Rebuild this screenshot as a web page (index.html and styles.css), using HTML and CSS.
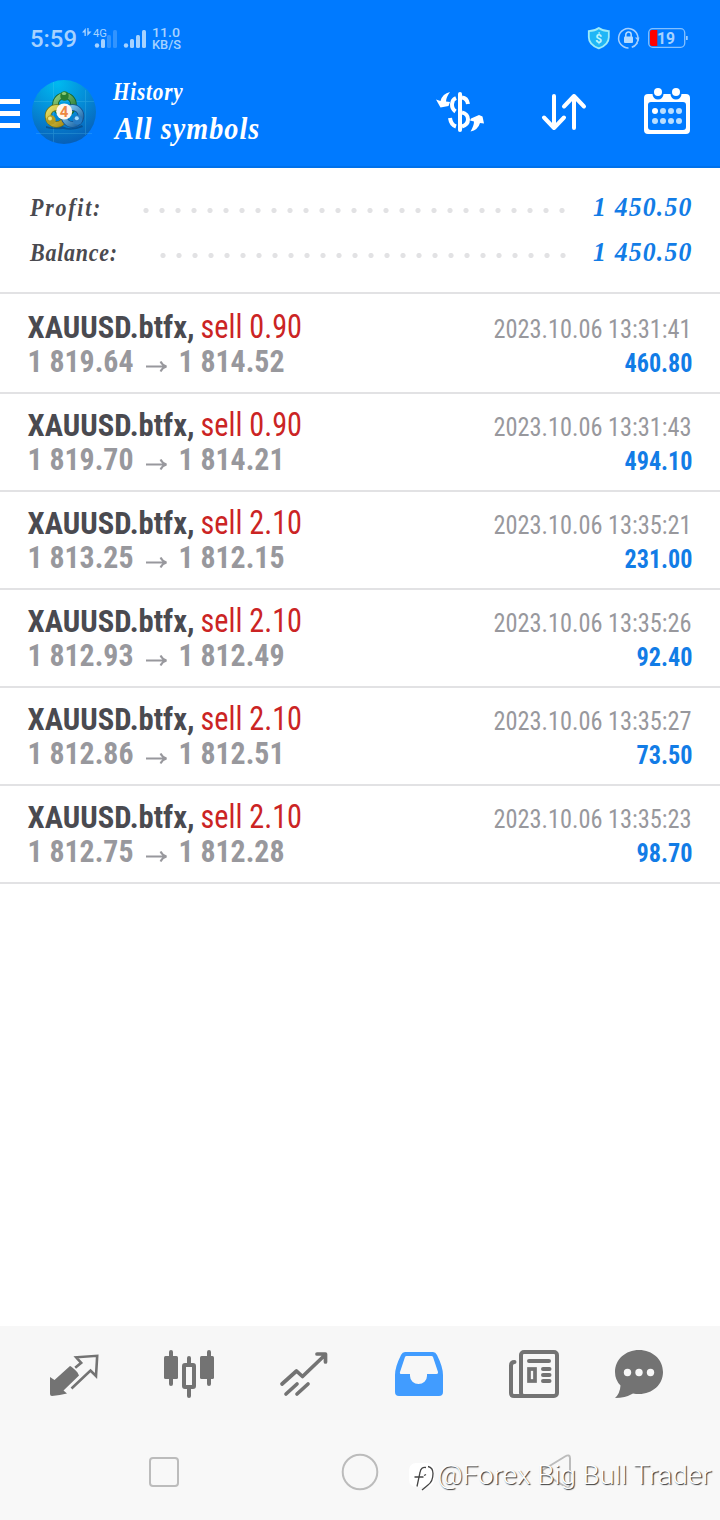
FILE: index.html
```html
<!DOCTYPE html>
<html lang="en">
<head>
<meta charset="utf-8">
<title>History</title>
<link rel="stylesheet" href="styles.css">
</head>
<body>
<header class="top">
  <div class="status">
    <svg class="status-left" width="160" height="76" viewBox="30 0 160 76">
      <text x="30" y="47" class="clock" textLength="47" lengthAdjust="spacingAndGlyphs">5:59</text>
      <path d="M85.800 28v8h-1.300v-3.500H82zM87.300 36v-8h1.300v3.500H91.500z" fill="#a6d2ff"/>
      <text x="93" y="37" class="tiny4g" textLength="14" lengthAdjust="spacingAndGlyphs">4G</text>
      <g class="sig">
        <circle cx="97" cy="45.500" r="2.200"/><rect x="101" y="39" width="4" height="9" rx="1.500"/>
        <rect x="107" y="35" width="4" height="13" rx="1.500" opacity=".3"/><rect x="113" y="30" width="4" height="18" rx="1.500" opacity=".3"/>
        <circle cx="126" cy="45.500" r="2.200"/><rect x="130" y="39" width="4" height="9" rx="1.500"/>
        <rect x="136" y="35" width="4" height="13" rx="1.500"/><rect x="142" y="30" width="4" height="18" rx="1.500"/>
      </g>
      <text x="152" y="37" class="speed" textLength="28" lengthAdjust="spacingAndGlyphs">11.0</text>
      <text x="152" y="49" class="unit" textLength="29" lengthAdjust="spacingAndGlyphs">KB/S</text>
    </svg>
    <svg class="status-right" width="104" height="76" viewBox="586 0 104 76">
      <path d="M598.800 28q4 3 10 3.200v6q0 7.500-10 11.200q-10-3.700-10-11.200v-6q6-.2 10-3.200z" fill="#20b6f6" stroke="#9debf8" stroke-width="1.800"/>
      <text x="595.200" y="42.500" class="dollar">$</text>
      <path d="M636.500 43.500a9.700 9.700 0 1 0-8 4.500" fill="none" stroke="#a4d0ff" stroke-width="1.500"/>
      <path d="M635 37.500h4.400l-1 4zM636.500 42.500l1.500 1q-3 4-6 4.500l-.5-1.500q3-1 5-4z" fill="#a4d0ff"/>
      <rect x="624" y="36.500" width="9" height="6.500" rx="1" fill="#b5dbff"/>
      <path d="M625.800 37v-2.200a2.700 2.700 0 0 1 5.400 0v2.200" fill="none" stroke="#b5dbff" stroke-width="1.500"/>
      <rect x="648.700" y="28.700" width="36" height="18.600" rx="4" fill="none" stroke="#83c0ff" stroke-width="1.300"/>
      <path d="M652 30h5.300v16H652q-2-.2-2-2V32q0-1.800 2-2z" fill="#f00"/>
      <path d="M686 36h1.700v4H686z" fill="#9accff"/>
      <text x="657" y="44" class="batt" textLength="18" lengthAdjust="spacingAndGlyphs">19</text>
    </svg>
  </div>
  <div class="bar">
    <svg class="menu" width="20" height="92" viewBox="0 76 20 92"><path d="M0 101.500h20M0 113.500h20M0 125.500h20" stroke="#fff" stroke-width="5"/></svg>
    <svg class="logo" width="64" height="92" viewBox="32 76 64 92">
      <defs>
        <radialGradient id="sky" cx=".4" cy=".05" r=".95"><stop offset="0" stop-color="#00baf0"/><stop offset=".5" stop-color="#048dd8"/><stop offset="1" stop-color="#0760b8"/></radialGradient>
        <linearGradient id="gn" x1="0" y1="0" x2="1" y2="1"><stop offset="0" stop-color="#8ecb7a"/><stop offset="1" stop-color="#217632"/></linearGradient>
        <linearGradient id="ye" x1="0" y1="0" x2="1" y2="1"><stop offset="0" stop-color="#e6e066"/><stop offset="1" stop-color="#a88a16"/></linearGradient>
        <linearGradient id="bl" x1="0" y1="0" x2="1" y2="1"><stop offset="0" stop-color="#8fd5f8"/><stop offset="1" stop-color="#155e9f"/></linearGradient>
      </defs>
      <circle cx="64" cy="112" r="32" fill="url(#sky)"/>
      <path d="M53.500 82v60M85.500 90v45M34 101.500h60M36 133.500h56" stroke="#65d0f2" stroke-width=".8" opacity=".28"/>
      <path d="M46 126q9 3 16 0q10 5 20-1l1 2q-9 4-20 2q-9 1-17-1z" fill="#063d75" opacity=".6"/>
      <g fill="none">
        <circle cx="64.500" cy="104.500" r="9" stroke="#17652b" stroke-width="6.500"/><circle cx="64.500" cy="104.500" r="9" stroke="url(#gn)" stroke-width="4.800"/>
        <circle cx="56.500" cy="116" r="8.500" stroke="#6f7117" stroke-width="6.500"/><circle cx="56.500" cy="116" r="8.500" stroke="url(#ye)" stroke-width="4.800"/>
        <circle cx="72.500" cy="116" r="8.500" stroke="#154f8e" stroke-width="6.500"/><circle cx="72.500" cy="116" r="8.500" stroke="url(#bl)" stroke-width="4.800"/>
      </g>
      <ellipse cx="64.500" cy="96" rx="4.200" ry="4.800" fill="#287e31"/><ellipse cx="64" cy="93.500" rx="2.200" ry="1.500" fill="#8acb76"/>
      <circle cx="51" cy="120" r="4.700" fill="#b59c20"/><circle cx="50" cy="118.500" r="2" fill="#efe583"/>
      <circle cx="77.500" cy="120" r="4.700" fill="#287cc4"/><circle cx="76.800" cy="118.300" r="2" fill="#a5dcff"/>
      <circle cx="64.200" cy="111.500" r="8" fill="#fff6ee"/>
      <text x="59.800" y="117" class="four">4</text>
    </svg>
    <svg class="title" width="170" height="92" viewBox="113 76 170 92">
      <text transform="translate(113 100) scale(.85 1)" class="script white" font-size="25" textLength="82" lengthAdjust="spacing">History</text>
      <text transform="translate(115 138.500) scale(.88 1)" class="script white" font-size="32" textLength="164" lengthAdjust="spacing">All symbols</text>
    </svg>
    <svg class="actions" width="280" height="92" viewBox="430 76 280 92">
      <g fill="none" stroke="#fff" stroke-width="4">
        <path d="M460 94v36" stroke-linecap="round"/>
        <path d="M456 98c-5 2-5.500 10-.5 13.500M462 97.500q5 .5 6 6.500M450 118q1 7 6 8.500M462 112.500c8 1.500 8 12 0 14"/>
      </g>
      <path d="M450 92q-7.500 1.500-9.500 9L436 99.500l4.500 8 8-1.500 1.500-4-4-.5q0-4 4-9.500zM470.500 131.500q7.500-1.500 9.500-8.500l4 .500-1.500-7-3.500-1.500-8 3.500-1 2 4 1q0 4-3.500 10z" fill="#fff"/>
      <path d="M554 96v32M544 117.500l10 10.500 10-10.500M574 128V96M564 106.500l10-10.500 10 10.500" fill="none" stroke="#fff" stroke-width="4" stroke-linecap="round" stroke-linejoin="round"/>
      <path d="M648 94h4.500a5.500 5.500 0 0 0 11 0h7a5.500 5.500 0 0 0 11 0h4.500q4 0 4 4v32q0 4-4 4h-38q-4 0-4-4V98q0-4 4-4zm3 8q-3 0-3 3v22q0 3 3 3h32q3 0 3-3v-22q0-3-3-3z" fill="#fff" fill-rule="evenodd"/>
      <circle cx="658" cy="92" r="4" fill="#fff"/><circle cx="676" cy="92" r="4" fill="#fff"/>
      <g fill="#b9deff"><circle cx="655" cy="111" r="3" fill="#fff"/><circle cx="663" cy="111" r="3"/><circle cx="671" cy="111" r="3"/><circle cx="679" cy="111" r="3"/><circle cx="655" cy="121" r="3"/><circle cx="663" cy="121" r="3"/><circle cx="671" cy="121" r="3"/><circle cx="679" cy="121" r="3"/></g>
    </svg>
  </div>
</header>

<main>
  <section class="summary">
    <div class="sum-row">
      <svg width="113" height="45"><text transform="translate(2 27.500) scale(.88 1)" class="script dark" font-size="25" textLength="80" lengthAdjust="spacing">Profit:</text></svg>
      <i class="dots profit-dots"></i>
      <svg width="100" height="45"><text transform="translate(1 27.500) scale(.92 1)" class="script blue" font-size="28" textLength="107" lengthAdjust="spacing">1 450.50</text></svg>
    </div>
    <div class="sum-row">
      <svg width="130" height="45"><text transform="translate(2 27.500) scale(.88 1)" class="script dark" font-size="25" textLength="99" lengthAdjust="spacing">Balance:</text></svg>
      <i class="dots balance-dots"></i>
      <svg width="100" height="45"><text transform="translate(1 27.500) scale(.92 1)" class="script blue" font-size="28" textLength="107" lengthAdjust="spacing">1 450.50</text></svg>
    </div>
  </section>
  <section class="deals" id="deals"></section>
</main>

<footer>
  <nav class="tabs">
    <svg width="720" height="94" viewBox="0 1326 720 94">
      <g fill="#737373">
        <path d="M50 1377l4.500 3 15.500-14q1.500 0 7.500 6.500l1.500 3-15.500 15 3.500 3q-7 1.500-15 2.500-2 0-2-2z"/>
        <path d="M71.500 1388.500l19-18 5.500 5.500 1.200-20.200-21 1.500 5 5.500-6 5" fill="none" stroke="#737373" stroke-width="2.600"/>
        <path d="M171 1352v32M209 1352v32M189 1358v38" stroke="#737373" stroke-width="4" stroke-linecap="round"/>
        <rect x="164" y="1356" width="14" height="23" rx="1.500"/><rect x="200" y="1356" width="14" height="23" rx="1.500"/>
        <rect x="184" y="1365" width="10" height="22" fill="#f7f7f7" stroke="#737373" stroke-width="4" rx="1"/>
      </g>
      <path d="M282 1384l14.500-13 6 5.500 23-22M317 1354h8.500v8M286 1394l11-10M297 1394l11-10" fill="none" stroke="#737373" stroke-width="3.700" stroke-linecap="round" stroke-linejoin="round"/>
      <path d="M405 1352h28q2.500 0 4 3 6 12 6 20v17q0 4-4 4h-40q-4 0-4-4v-17q0-8 6-20 1.500-3 4-3zm1.500 4q-1 0-1.500 1l-5 15q-.7 2 1.500 2h8.500v2a8.500 8 0 0 0 17 0v-2h9.500q2 0 1.500-2l-5-15q-.5-1-1.500-1z" fill="#419cff" fill-rule="evenodd"/>
      <g fill="none" stroke="#737373" stroke-width="4" stroke-linecap="round">
        <rect x="521" y="1352" width="36" height="44" rx="3"/>
        <path d="M514.500 1362q-3.500 0-3.500 3.500V1393q0 3 3 3h10M529 1361h20M543 1369h6.500M543 1375h6.500M543 1381h6.500"/>
        <rect x="529" y="1369" width="6" height="12" stroke-width="3.700"/>
      </g>
      <path d="M639 1350c13.500 0 24 9.500 24 22s-10.500 22-24 22q-3 0-6-.6-8 4.600-18 4.600 5-4.500 5.500-12.500-5.500-5.500-5.500-13.500c0-12.500 10.500-22 24-22z" fill="#737373"/>
      <g fill="#f7f7f7"><circle cx="627.500" cy="1372.500" r="3.700"/><circle cx="639" cy="1372.500" r="3.700"/><circle cx="650.500" cy="1372.500" r="3.700"/></g>
    </svg>
  </nav>
  <div class="keys">
    <svg width="720" height="100" viewBox="0 1420 720 100">
      <g fill="none" stroke="#bcbcbc" stroke-width="2">
        <rect x="150" y="1458" width="28" height="28" rx="3"/>
        <circle cx="360" cy="1472" r="17.300"/>
        <path d="M543 1470l22-13.500q5-3 5 2v26q0 5-5 2L543 1473q-2-1.500 0-3z"/>
      </g>
    </svg>
    <svg class="watermark" width="312" height="50" viewBox="408 1450 312 50">
      <rect x="409" y="1463" width="25" height="24" rx="7" fill="#fff"/>
      <path d="M414.500 1477h9M426 1467.500q-5-1-6 5l-3 14M428 1466.500q5 1 5 7 0 8-5 11.500l-6 5M424 1475.500l2-1" fill="none" stroke="#444" stroke-width="1.300"/>
      <text x="437.500" y="1484" textLength="274" lengthAdjust="spacingAndGlyphs" class="mark">@Forex Big Bull Trader</text>
    </svg>
  </div>
</footer>
<script src="deals.js"></script>
</body>
</html>
```
FILE: styles.css
```css
* { box-sizing: border-box; }
body { margin: 0; width: 720px; height: 1520px; background: #fff; display: flex; flex-direction: column; font-family: "Roboto Condensed", Roboto, sans-serif; overflow: hidden; }
svg { display: block; overflow: visible; flex: none; }
.top { height: 168px; background: #007aff; border-bottom: 2px solid #0071ea; color: #fff; }
.status { display: flex; justify-content: space-between; height: 76px; padding: 0 30px; }
.bar { display: flex; height: 90px; }
.logo { margin-left: 12px; }
.title { margin-left: 17px; }
.actions { margin-left: 147px; }
text { font-family: "Roboto Condensed", Roboto, sans-serif; font-stretch: condensed; white-space: pre; }
.clock { font: 500 24px Roboto, sans-serif; fill: #a6d2ff; }
.sig { fill: #a6d2ff; }
.tiny4g { font: 11px Roboto, sans-serif; fill: #a6d2ff; }
.speed { font: 500 13px Roboto, sans-serif; fill: #a6d2ff; }
.unit { font: 500 12px Roboto, sans-serif; fill: #a6d2ff; }
.dollar { font: 700 12px Roboto, sans-serif; fill: #bdf5ff; }
.batt { font: 700 16px Roboto, sans-serif; fill: #a6d2ff; }
.four { font: 700 15px Roboto, sans-serif; fill: #ed8742; }
.script { font-family: "Liberation Serif", serif; font-style: italic; font-weight: 700; }
.white { fill: #fff; }
.dark { fill: #4a4a50; }
.blue { fill: #127ce6; }
main { flex: 1; }
.summary { height: 126px; padding: 20px 28px 0; border-bottom: 2px solid #e2e2e4; }
.sum-row { display: flex; height: 45px; }
.dots { height: 45px; background-image: radial-gradient(circle at 8px 22.5px, #e2e2e4 2.2px, transparent 3px); background-size: 16px 45px; background-repeat: repeat-x; }
.profit-dots { width: 432px; margin: 0 22.500px 0 -3.500px; }
.balance-dots { width: 416px; margin: 0 21.500px 0 -3.500px; }
.deal { display: flex; justify-content: space-between; height: 98px; padding: 0 28px; border-bottom: 2px solid #e2e2e4; }
.deal:first-child { height: 100px; padding-top: 2px; }
.symbol { font-size: 32px; font-weight: 700; fill: #4a4a50; }
.side { font-size: 33px; fill: #cb2424; }
.price { font-size: 31px; font-weight: 700; fill: #98989d; }
.arrow { fill: none; stroke: #98989d; stroke-width: 2; }
.time { font-size: 26px; fill: #98989d; }
.gain { font-size: 26px; font-weight: 700; fill: #127ce6; }
footer { height: 194px; background: #f7f7f7; }
.keys { position: relative; height: 100px; background: #f8f8f8; }
.watermark { position: absolute; left: 408px; top: 30px; }
.mark { font: 300 26px Roboto, sans-serif; fill: #fff; text-shadow: 1px 1px 1px #333; }
```
FILE: deals.js
```js
const deals = [
  ["0.90", "1 819.64", "1 814.52", "13:31:41", "460.80"],
  ["0.90", "1 819.70", "1 814.21", "13:31:43", "494.10"],
  ["2.10", "1 813.25", "1 812.15", "13:35:21", "231.00"],
  ["2.10", "1 812.93", "1 812.49", "13:35:26", "92.40"],
  ["2.10", "1 812.86", "1 812.51", "13:35:27", "73.50"],
  ["2.10", "1 812.75", "1 812.28", "13:35:23", "98.70"]
];
const fit = 'lengthAdjust="spacingAndGlyphs"';
document.getElementById("deals").innerHTML = deals.map(([lot, open, close, time, gain]) => {
  const w = gain.length === 6 ? 68 : 56;
  return `<article class="deal">
    <svg width="280" height="96">
      <text class="symbol" x="-.5" y="42" textLength="167" ${fit}>XAUUSD.btfx,</text>
      <text class="side" x="172.500" y="42" textLength="101.500" ${fit}>sell ${lot}</text>
      <text class="price" x="-.5" y="76" textLength="106" ${fit}>${open}</text>
      <path class="arrow" d="M118 70.500h19M132.500 65.500q2 4 6 5q-4 1-6 5"/>
      <text class="price" x="150.500" y="76" textLength="106" ${fit}>${close}</text>
    </svg>
    <svg width="200" height="96">
      <text class="time" x="1.500" y="42" textLength="198" ${fit}>2023.10.06 ${time}</text>
      <text class="gain" x="${200.5 - w}" y="76" textLength="${w}" ${fit}>${gain}</text>
    </svg>
  </article>`;
}).join("");
```
